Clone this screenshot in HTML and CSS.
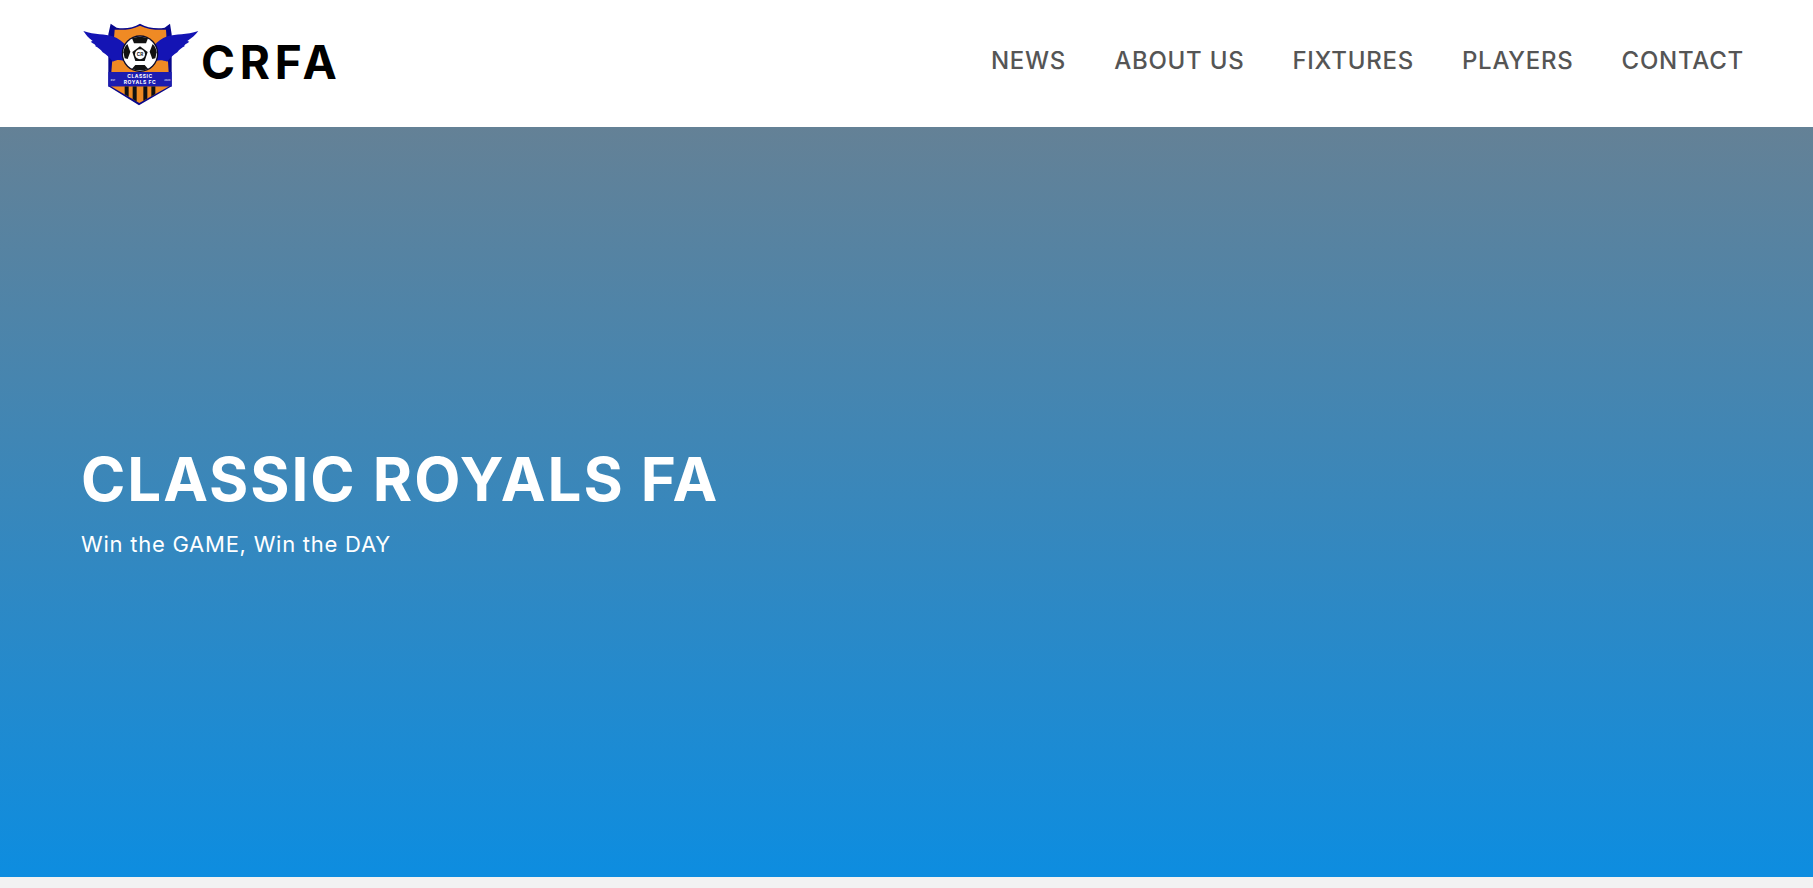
FILE: index.html
```html
<!DOCTYPE html>
<html lang="en">
<head>
<meta charset="utf-8">
<title>CRFA</title>
<link rel="stylesheet" href="styles.css">
</head>
<body>
<header class="site-header">
  <a class="brand" href="#">
    <svg class="brand-logo" viewBox="30 24 375 270" aria-hidden="true">
      <defs>
        <clipPath id="lower"><path d="M122 226H298L208 276Z"/></clipPath>
      </defs>
      <path class="navy" d="M122 38L140 50C165 54 190 50 210 38C230 50 260 54 284 50L300 38L305 70V226L207 283L115 226V70Z"/>
      <path class="orange" d="M134 56C165 58 190 54 210 44C230 54 260 58 288 56L296 184H124Z"/>
      <path class="wing" d="M40 60C75 72 105 68 128 76C145 82 158 92 168 104L162 150C150 146 140 146 128 152C120 140 108 130 98 124C92 116 84 110 76 106C80 102 70 98 62 92L68 90C56 82 48 72 40 60Z"/>
      <path class="wing" d="M385 60C350 72 318 68 292 76C275 82 262 92 252 104L258 150C270 146 280 148 292 152C300 140 312 130 322 124C328 116 336 110 344 106C340 102 350 98 358 92L352 90C364 82 377 72 385 60Z"/>
      <circle class="ball-edge" cx="210" cy="128" r="55"/>
      <circle class="ball" cx="210" cy="128" r="51"/>
      <path class="patch" d="M186 82C198 77 222 77 234 82L228 97H192Z"/>
      <path class="patch" d="M160 124C161 114 165 106 172 99L181 122L173 144L164 142Z"/>
      <path class="patch" d="M260 124C259 114 255 106 248 99L239 122L247 144L256 142Z"/>
      <path class="patch" d="M186 173L196 162H224L234 173C224 179 196 179 186 173Z"/>
      <path class="patch" d="M210 106L233 123L224 150H196L187 123Z"/>
      <circle class="ball" cx="210" cy="130" r="15"/>
      <text class="crest-mark" x="210" y="135" text-anchor="middle">CR</text>
      <rect class="banner" x="115" y="183" width="190" height="44"/>
      <text class="crest-name" x="210" y="201" text-anchor="middle">CLASSIC</text>
      <text class="crest-name" x="210" y="218" text-anchor="middle">ROYALS FC</text>
      <text class="crest-est" x="129" y="210" text-anchor="middle">EST</text>
      <text class="crest-est" x="292" y="210" text-anchor="middle">2020</text>
      <g clip-path="url(#lower)">
        <rect class="orange" x="115" y="224" width="190" height="58"/>
        <path class="patch" d="M164 224h12v58h-12zM188 224h12v58h-12zM220 224h12v58h-12zM244 224h12v58h-12z"/>
      </g>
    </svg>
    <span class="brand-name">CRFA</span>
  </a>
  <nav class="main-nav">
    <a href="#">NEWS</a>
    <a href="#">ABOUT US</a>
    <a href="#">FIXTURES</a>
    <a href="#">PLAYERS</a>
    <a href="#">CONTACT</a>
  </nav>
</header>
<section class="hero">
  <h1>CLASSIC ROYALS FA</h1>
  <p>Win the GAME, Win the DAY</p>
</section>
<div class="page-rest"></div>
</body>
</html>
```
FILE: styles.css
```css
* { box-sizing: border-box; }
html, body { height: 100%; }
body {
  margin: 0;
  display: flex;
  flex-direction: column;
  overflow: hidden;
  background: #f2f2f2;
  font-family: Inter, "Liberation Sans", sans-serif;
}
.site-header {
  height: 127px;
  flex: none;
  display: flex;
  align-items: center;
  justify-content: space-between;
  padding: 0 69px 0 80px;
  background: #fff;
}
.brand {
  display: flex;
  align-items: center;
  color: #000;
  text-decoration: none;
}
.brand-logo { width: 125px; height: 90px; flex: none; }
.brand-name {
  font-size: 46px;
  font-weight: 700;
  letter-spacing: 4.8px;
  margin-left: -4px;
  margin-top: -4px;
}
.wing { fill: #1414b4; }
.navy { fill: #07078c; }
.orange { fill: #ef8a24; }
.ball { fill: #fff; }
.ball-edge { fill: #0b0b2a; }
.patch { fill: #111; }
.banner { fill: #1c1cb0; }
.crest-mark { font: 700 14px Inter, sans-serif; fill: #222; }
.crest-name { font: 700 15px Inter, sans-serif; fill: #fff; letter-spacing: 1.5px; }
.crest-est { font: 700 7px Inter, sans-serif; fill: #d8d8f0; }
.main-nav {
  display: flex;
  gap: 48px;
  margin-top: -6px;
}
.main-nav a {
  color: #555;
  font-size: 24px;
  font-weight: 500;
  text-decoration: none;
  letter-spacing: 0.75px;
}
.hero {
  height: 750px;
  flex: none;
  display: flex;
  flex-direction: column;
  justify-content: center;
  padding: 0 0 2px 81px;
  color: #fff;
  background: linear-gradient(180deg, #648196 0%, #0d8de0 100%);
}
.hero h1 {
  margin: 0;
  font-size: 60px;
  font-weight: 750;
  line-height: 72px;
  letter-spacing: 1.95px;
}
.hero p {
  margin: 14px 0 0;
  font-size: 22px;
  line-height: 30px;
  letter-spacing: 0.75px;
}
.page-rest { flex: 1; }
```
